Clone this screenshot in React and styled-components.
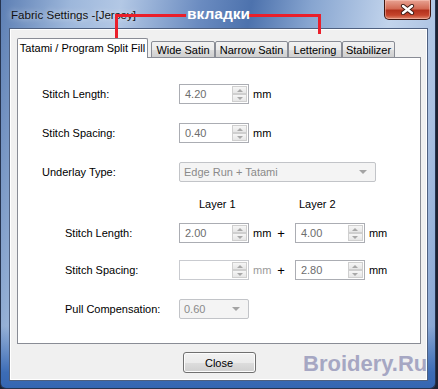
import React from "react";
import styled, {createGlobalStyle} from "styled-components";

const GlobalStyle = createGlobalStyle`
  html, body {
    margin: 0;
    padding: 0;
    background: #1d2232;
  }
  body {
    font-family: "Liberation Sans", Arial, sans-serif;
  }
`;

const Window = styled.div`
  position: relative;
  width: 436px;
  height: 389px;
  box-sizing: border-box;
  display: flex;
  flex-direction: column;
  border: 1px solid #263450;
  border-top: none;
  border-radius: 0 0 6px 6px;
  background:
    linear-gradient(180deg, rgba(58, 106, 180, 0) 0%, rgba(58, 106, 180, 0) 84%, #3c6cb6 96%, #3566b2 100%),
    linear-gradient(100deg, #5d7fb4 0%, #9db7db 14%, #b3c8e5 24%, #6a8bc0 40%, #4d72ad 50%, #87a5d0 62%, #c2d4ec 78%, #a9c0e1 90%, #7f9fcf 100%);
`;

const TitleBar = styled.div`
  display: flex;
  align-items: flex-start;
  height: 28px;
  padding-left: 10px;
`;

const Title = styled.span`
  margin-top: 8px;
  font-size: 11.6px;
  color: #111;
  text-shadow: 0 0 6px rgba(255, 255, 255, 0.8);
`;

const CloseX = styled.div`
  margin-left: auto;
  margin-right: 4px;
  width: 47px;
  height: 20px;
  box-sizing: border-box;
  border: 1px solid #3f1710;
  border-top: none;
  border-radius: 0 0 5px 5px;
  background: linear-gradient(180deg, #e8a393 0%, #d36b55 45%, #b3321d 55%, #c5442c 80%, #e08a6f 100%);
  display: flex;
  align-items: center;
  justify-content: center;
  box-shadow: inset 0 0 0 1px rgba(255, 210, 200, 0.45);
`;

const Annotation = styled.svg`
  position: absolute;
  left: 0;
  top: 0;
  pointer-events: none;
`;

const AnnotationText = styled.span`
  position: absolute;
  left: 186px;
  top: 5px;
  font-size: 15.5px;
  font-weight: 700;
  color: #fff;
`;

const Client = styled.div`
  flex: 1;
  display: flex;
  flex-direction: column;
  margin: 0 7px 7px 8px;
  padding: 9px 6px 0 7px;
  background: #f0f0f0;
  border: 1px solid #4e6080;
  box-shadow: inset 0 0 0 1px #ffffff;
`;

const TabStrip = styled.div`
  display: flex;
  align-items: flex-end;
  position: relative;
  z-index: 1;
`;

const Tab = styled.div`
  box-sizing: border-box;
  width: ${({$w}) => $w}px;
  height: ${({$active}) => ($active ? 20 : 17)}px;
  margin-left: ${({$ml}) => $ml || 0}px;
  padding-top: ${({$active}) => ($active ? 3 : 2)}px;
  text-align: center;
  font-size: 11px;
  color: #000;
  border: 1px solid #898c95;
  border-bottom: ${({$active}) => ($active ? "none" : "1px solid #898c95")};
  border-radius: 2px 2px 0 0;
  background: ${({$active}) =>
    $active ? "#ffffff" : "linear-gradient(180deg, #f2f2f2 0%, #ebebeb 50%, #dddddd 51%, #cfcfcf 100%)"};
`;

const Panel = styled.div`
  height: 287px;
  box-sizing: border-box;
  margin-top: -1px;
  padding: 26px 0 0 24px;
  background: #ffffff;
  border: 1px solid #898c95;
`;

const Row = styled.div`
  display: flex;
  align-items: center;
  height: ${({$h}) => $h || 20}px;
  margin-top: ${({$gap}) => $gap || 0}px;
`;

const Label = styled.span`
  box-sizing: border-box;
  width: 137px;
  padding-left: ${({$indent}) => $indent || 0}px;
  font-size: 11px;
  color: #000;
`;

const LayerHead = styled.span`
  width: 100px;
  font-size: 11px;
  color: #000;
  &:first-child {
    margin-left: 157px;
  }
`;

const SpinBox = styled.div`
  box-sizing: border-box;
  width: 70px;
  height: 20px;
  display: flex;
  border: 1px solid ${({$disabled}) => ($disabled ? "#c9cbd0" : "#abadb3")};
  background: #fff;
`;

const SpinValue = styled.span`
  flex: 1;
  padding-left: 5px;
  line-height: 18px;
  font-size: 11px;
  color: #6d6d6d;
`;

const SpinButtons = styled.div`
  width: 15px;
  display: flex;
  flex-direction: column;
  padding: 1px 1px 1px 0;
`;

const SpinHalf = styled.div`
  flex: 1;
  box-sizing: border-box;
  border: 1px solid #cfcfcf;
  background: linear-gradient(180deg, #f6f6f6, #e6e6e6);
  display: flex;
  align-items: center;
  justify-content: center;
  &::after {
    content: "";
    border-left: 3px solid transparent;
    border-right: 3px solid transparent;
    ${({$up}) => ($up ? "border-bottom: 3px solid #a8a8a8;" : "border-top: 3px solid #a8a8a8;")}
  }
`;

const Unit = styled.span`
  margin-left: 4px;
  font-size: 11px;
  color: ${({$disabled}) => ($disabled ? "#9a9a9a" : "#000")};
`;

const Plus = styled.span`
  margin: 0 10px 0 6px;
  font-size: 13px;
  color: #000;
`;

const Dropdown = styled.div`
  box-sizing: border-box;
  width: ${({$w}) => $w}px;
  height: 20px;
  display: flex;
  align-items: center;
  padding: 0 8px 0 4px;
  border: 1px solid #c2c4c8;
  border-radius: 2px;
  background: #f4f4f4;
  font-size: 11px;
  color: #8a8a8a;
  &::after {
    content: "";
    margin-left: auto;
    border-left: 4px solid transparent;
    border-right: 4px solid transparent;
    border-top: 4px solid #a4a4a4;
  }
`;

const Footer = styled.div`
  flex: 1;
  display: flex;
  justify-content: center;
  padding-top: 8px;
`;

const Button = styled.button`
  width: 73px;
  height: 21px;
  padding: 0;
  font-family: inherit;
  font-size: 11px;
  color: #000;
  border: 1px solid #707070;
  border-radius: 3px;
  background: linear-gradient(180deg, #f2f2f2 0%, #ebebeb 50%, #dddddd 51%, #cfcfcf 100%);
  box-shadow: inset 0 0 0 1px #fcfcfc;
`;

const Watermark = styled.span`
  position: absolute;
  left: 302px;
  top: 351px;
  font-size: 22px;
  font-weight: 700;
  color: #a6a7c3;
`;

const Spin = ({value, disabled}) => (
  <SpinBox $disabled={disabled}>
    <SpinValue>{value}</SpinValue>
    <SpinButtons>
      <SpinHalf $up />
      <SpinHalf />
    </SpinButtons>
  </SpinBox>
);

export default function App() {
  return (
    <>
      <GlobalStyle />
      <Window>
        <TitleBar>
          <Title>Fabric Settings -[Jersey]</Title>
          <CloseX>
            <svg width="15" height="11" viewBox="0 0 15 11">
              <path d="M3 2 L12 9 M12 2 L3 9" stroke="#3a1a14" strokeWidth="4.2" strokeLinecap="round" />
              <path d="M3 2 L12 9 M12 2 L3 9" stroke="#ffffff" strokeWidth="2.4" strokeLinecap="round" />
            </svg>
          </CloseX>
        </TitleBar>
        <Client>
          <TabStrip>
            <Tab $active $w={131}>Tatami / Program Split Fill</Tab>
            <Tab $w={64} $ml={3}>Wide Satin</Tab>
            <Tab $w={73}>Narrow Satin</Tab>
            <Tab $w={54}>Lettering</Tab>
            <Tab $w={53}>Stabilizer</Tab>
          </TabStrip>
          <Panel>
            <Row>
              <Label>Stitch Length:</Label>
              <Spin value="4.20" />
              <Unit>mm</Unit>
            </Row>
            <Row $gap={19}>
              <Label>Stitch Spacing:</Label>
              <Spin value="0.40" />
              <Unit>mm</Unit>
            </Row>
            <Row $gap={19}>
              <Label>Underlay Type:</Label>
              <Dropdown $w={197}>Edge Run + Tatami</Dropdown>
            </Row>
            <Row $gap={15} $h={14}>
              <LayerHead>Layer 1</LayerHead>
              <LayerHead>Layer 2</LayerHead>
            </Row>
            <Row $gap={12}>
              <Label $indent={23}>Stitch Length:</Label>
              <Spin value="2.00" />
              <Unit>mm</Unit>
              <Plus>+</Plus>
              <Spin value="4.00" />
              <Unit>mm</Unit>
            </Row>
            <Row $gap={17}>
              <Label $indent={23}>Stitch Spacing:</Label>
              <Spin value="" disabled />
              <Unit $disabled>mm</Unit>
              <Plus>+</Plus>
              <Spin value="2.80" />
              <Unit>mm</Unit>
            </Row>
            <Row $gap={19}>
              <Label $indent={23}>Pull Compensation:</Label>
              <Dropdown $w={70}>0.60</Dropdown>
            </Row>
          </Panel>
          <Footer>
            <Button>Close</Button>
          </Footer>
        </Client>
        <Annotation width="436" height="45">
          <polyline points="115.5,40 115.5,15.5 185,15.5" fill="none" stroke="#ea1f2b" strokeWidth="3" />
          <polyline points="247,15.5 318.5,15.5 318.5,34" fill="none" stroke="#ea1f2b" strokeWidth="3" />
        </Annotation>
        <AnnotationText>вкладки</AnnotationText>
        <Watermark>Broidery.Ru</Watermark>
      </Window>
    </>
  );
}
